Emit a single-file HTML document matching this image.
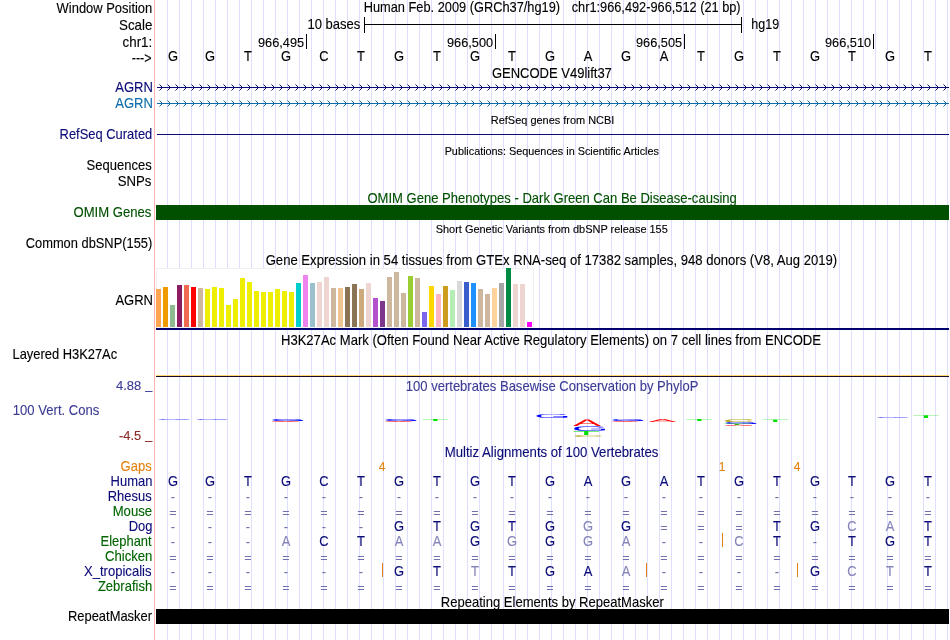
<!DOCTYPE html>
<html><head><meta charset="utf-8"><title>UCSC Genome Browser - hg19 chr1:966,492-966,512</title>
<style>
html,body{margin:0;padding:0;background:#fff;}
svg{display:block;will-change:transform;}
text{font-family:"Liberation Sans", Arial, Helvetica, sans-serif;font-size:14px;fill:#000;stroke:#000;stroke-width:.12px;white-space:pre;}
.s{font-size:11px;}
.r{text-anchor:end;}
.c{text-anchor:middle;}
.nv{fill:#0c0c78;stroke:#0c0c78;}
.lt{fill:#8585bb;stroke:#8585bb;}
.gr{fill:#005000;stroke:#005000;}
.dg{fill:#006400;stroke:#006400;}
.or{fill:#e2820f;stroke:#e2820f;}
.cn{fill:#3c3c96;stroke:#3c3c96;}
.rd{fill:#8c2828;stroke:#8c2828;}
.tl{fill:#0f6eaa;stroke:#0f6eaa;}
.dm{fill:#7070ae;stroke:none;}
</style></head><body>
<svg width="950" height="640" viewBox="0 0 950 640">
<rect x="0" y="0" width="950" height="640" fill="#fff"/>

<g shape-rendering="crispEdges">
<rect x="154" y="0" width="1" height="640" fill="#ffb4b4"/>
<rect x="167" y="0" width="1" height="640" fill="#dedeff"/>
<rect x="179" y="0" width="1" height="640" fill="#dedeff"/>
<rect x="191" y="0" width="1" height="640" fill="#dedeff"/>
<rect x="203" y="0" width="1" height="640" fill="#dedeff"/>
<rect x="215" y="0" width="1" height="640" fill="#dedeff"/>
<rect x="227" y="0" width="1" height="640" fill="#dedeff"/>
<rect x="239" y="0" width="1" height="640" fill="#dedeff"/>
<rect x="251" y="0" width="1" height="640" fill="#dedeff"/>
<rect x="263" y="0" width="1" height="640" fill="#dedeff"/>
<rect x="275" y="0" width="1" height="640" fill="#dedeff"/>
<rect x="287" y="0" width="1" height="640" fill="#dedeff"/>
<rect x="299" y="0" width="1" height="640" fill="#dedeff"/>
<rect x="311" y="0" width="1" height="640" fill="#dedeff"/>
<rect x="323" y="0" width="1" height="640" fill="#dedeff"/>
<rect x="335" y="0" width="1" height="640" fill="#dedeff"/>
<rect x="347" y="0" width="1" height="640" fill="#dedeff"/>
<rect x="359" y="0" width="1" height="640" fill="#dedeff"/>
<rect x="371" y="0" width="1" height="640" fill="#dedeff"/>
<rect x="383" y="0" width="1" height="640" fill="#dedeff"/>
<rect x="395" y="0" width="1" height="640" fill="#dedeff"/>
<rect x="407" y="0" width="1" height="640" fill="#dedeff"/>
<rect x="419" y="0" width="1" height="640" fill="#dedeff"/>
<rect x="431" y="0" width="1" height="640" fill="#dedeff"/>
<rect x="443" y="0" width="1" height="640" fill="#dedeff"/>
<rect x="455" y="0" width="1" height="640" fill="#dedeff"/>
<rect x="467" y="0" width="1" height="640" fill="#dedeff"/>
<rect x="479" y="0" width="1" height="640" fill="#dedeff"/>
<rect x="491" y="0" width="1" height="640" fill="#dedeff"/>
<rect x="503" y="0" width="1" height="640" fill="#dedeff"/>
<rect x="515" y="0" width="1" height="640" fill="#dedeff"/>
<rect x="527" y="0" width="1" height="640" fill="#dedeff"/>
<rect x="539" y="0" width="1" height="640" fill="#dedeff"/>
<rect x="551" y="0" width="1" height="640" fill="#dedeff"/>
<rect x="563" y="0" width="1" height="640" fill="#dedeff"/>
<rect x="575" y="0" width="1" height="640" fill="#dedeff"/>
<rect x="587" y="0" width="1" height="640" fill="#dedeff"/>
<rect x="599" y="0" width="1" height="640" fill="#dedeff"/>
<rect x="611" y="0" width="1" height="640" fill="#dedeff"/>
<rect x="623" y="0" width="1" height="640" fill="#dedeff"/>
<rect x="635" y="0" width="1" height="640" fill="#dedeff"/>
<rect x="647" y="0" width="1" height="640" fill="#dedeff"/>
<rect x="659" y="0" width="1" height="640" fill="#dedeff"/>
<rect x="671" y="0" width="1" height="640" fill="#dedeff"/>
<rect x="683" y="0" width="1" height="640" fill="#dedeff"/>
<rect x="695" y="0" width="1" height="640" fill="#dedeff"/>
<rect x="707" y="0" width="1" height="640" fill="#dedeff"/>
<rect x="719" y="0" width="1" height="640" fill="#dedeff"/>
<rect x="731" y="0" width="1" height="640" fill="#dedeff"/>
<rect x="743" y="0" width="1" height="640" fill="#dedeff"/>
<rect x="755" y="0" width="1" height="640" fill="#dedeff"/>
<rect x="767" y="0" width="1" height="640" fill="#dedeff"/>
<rect x="779" y="0" width="1" height="640" fill="#dedeff"/>
<rect x="791" y="0" width="1" height="640" fill="#dedeff"/>
<rect x="803" y="0" width="1" height="640" fill="#dedeff"/>
<rect x="815" y="0" width="1" height="640" fill="#dedeff"/>
<rect x="827" y="0" width="1" height="640" fill="#dedeff"/>
<rect x="839" y="0" width="1" height="640" fill="#dedeff"/>
<rect x="851" y="0" width="1" height="640" fill="#dedeff"/>
<rect x="863" y="0" width="1" height="640" fill="#dedeff"/>
<rect x="875" y="0" width="1" height="640" fill="#dedeff"/>
<rect x="887" y="0" width="1" height="640" fill="#dedeff"/>
<rect x="899" y="0" width="1" height="640" fill="#dedeff"/>
<rect x="911" y="0" width="1" height="640" fill="#dedeff"/>
<rect x="923" y="0" width="1" height="640" fill="#dedeff"/>
<rect x="935" y="0" width="1" height="640" fill="#dedeff"/>
<rect x="947" y="0" width="1" height="640" fill="#dedeff"/>
</g>
<text transform="translate(56.60 13) scale(0.9256 1)" class="">Window Position</text>
<text transform="translate(119.00 30) scale(0.9528 1)" class="">Scale</text>
<text transform="translate(122.56 47) scale(0.9523 1)" class="">chr1:</text>
<text transform="translate(131.69 63) scale(0.8985 1)" class="">---&gt;</text>
<text transform="translate(363.67 12) scale(0.9158 1)" class="">Human Feb. 2009 (GRCh37/hg19)</text>
<text transform="translate(571.69 12) scale(0.9128 1)" class="">chr1:966,492-966,512 (21 bp)</text>
<text transform="translate(307.41 29) scale(0.9320 1)" class="">10 bases</text>
<text transform="translate(751.26 29) scale(0.8969 1)" class="">hg19</text>
<g shape-rendering="crispEdges" fill="#000">
<rect x="364" y="24" width="378" height="1"/>
<rect x="364" y="17" width="1" height="16"/>
<rect x="741" y="17" width="1" height="16"/>
<rect x="306" y="34" width="1" height="15"/>
<rect x="495" y="34" width="1" height="15"/>
<rect x="684" y="34" width="1" height="15"/>
<rect x="873" y="34" width="1" height="15"/>
</g>
<text transform="translate(258.03 47) scale(0.9101 0.9)" class="">966,495</text>
<text transform="translate(447.03 47) scale(0.9101 0.9)" class="">966,500</text>
<text transform="translate(636.03 47) scale(0.9101 0.9)" class="">966,505</text>
<text transform="translate(825.03 47) scale(0.9101 0.9)" class="">966,510</text>
<text transform="translate(173.0 61) scale(0.925 1)" class="c" >G</text>
<text transform="translate(210.0 61) scale(0.925 1)" class="c" >G</text>
<text transform="translate(248.0 61) scale(0.925 1)" class="c" >T</text>
<text transform="translate(286.0 61) scale(0.925 1)" class="c" >G</text>
<text transform="translate(324.0 61) scale(0.925 1)" class="c" >C</text>
<text transform="translate(361.0 61) scale(0.925 1)" class="c" >T</text>
<text transform="translate(399.0 61) scale(0.925 1)" class="c" >G</text>
<text transform="translate(437.0 61) scale(0.925 1)" class="c" >T</text>
<text transform="translate(475.0 61) scale(0.925 1)" class="c" >G</text>
<text transform="translate(512.0 61) scale(0.925 1)" class="c" >T</text>
<text transform="translate(550.0 61) scale(0.925 1)" class="c" >G</text>
<text transform="translate(588.0 61) scale(0.925 1)" class="c" >A</text>
<text transform="translate(626.0 61) scale(0.925 1)" class="c" >G</text>
<text transform="translate(664.0 61) scale(0.925 1)" class="c" >A</text>
<text transform="translate(701.0 61) scale(0.925 1)" class="c" >T</text>
<text transform="translate(739.0 61) scale(0.925 1)" class="c" >G</text>
<text transform="translate(777.0 61) scale(0.925 1)" class="c" >T</text>
<text transform="translate(815.0 61) scale(0.925 1)" class="c" >G</text>
<text transform="translate(852.0 61) scale(0.925 1)" class="c" >T</text>
<text transform="translate(890.0 61) scale(0.925 1)" class="c" >G</text>
<text transform="translate(928.0 61) scale(0.925 1)" class="c" >T</text>
<text transform="translate(491.91 78) scale(0.9299 1)" class="">GENCODE V49lift37</text>
<text transform="translate(115.20 92) scale(0.9329 1)" class="nv">AGRN</text>
<text transform="translate(115.20 108) scale(0.9329 1)" class="tl">AGRN</text>
<g shape-rendering="crispEdges"><rect x="157" y="87" width="792" height="1" fill="#0c0c78"/></g>
<path d="M159.5 84.5L162.5 87.5L159.5 90.5M167.5 84.5L170.5 87.5L167.5 90.5M175.5 84.5L178.5 87.5L175.5 90.5M183.5 84.5L186.5 87.5L183.5 90.5M191.5 84.5L194.5 87.5L191.5 90.5M199.5 84.5L202.5 87.5L199.5 90.5M207.5 84.5L210.5 87.5L207.5 90.5M215.5 84.5L218.5 87.5L215.5 90.5M223.5 84.5L226.5 87.5L223.5 90.5M231.5 84.5L234.5 87.5L231.5 90.5M239.5 84.5L242.5 87.5L239.5 90.5M247.5 84.5L250.5 87.5L247.5 90.5M255.5 84.5L258.5 87.5L255.5 90.5M263.5 84.5L266.5 87.5L263.5 90.5M271.5 84.5L274.5 87.5L271.5 90.5M279.5 84.5L282.5 87.5L279.5 90.5M287.5 84.5L290.5 87.5L287.5 90.5M295.5 84.5L298.5 87.5L295.5 90.5M303.5 84.5L306.5 87.5L303.5 90.5M311.5 84.5L314.5 87.5L311.5 90.5M319.5 84.5L322.5 87.5L319.5 90.5M327.5 84.5L330.5 87.5L327.5 90.5M335.5 84.5L338.5 87.5L335.5 90.5M343.5 84.5L346.5 87.5L343.5 90.5M351.5 84.5L354.5 87.5L351.5 90.5M359.5 84.5L362.5 87.5L359.5 90.5M367.5 84.5L370.5 87.5L367.5 90.5M375.5 84.5L378.5 87.5L375.5 90.5M383.5 84.5L386.5 87.5L383.5 90.5M391.5 84.5L394.5 87.5L391.5 90.5M399.5 84.5L402.5 87.5L399.5 90.5M407.5 84.5L410.5 87.5L407.5 90.5M415.5 84.5L418.5 87.5L415.5 90.5M423.5 84.5L426.5 87.5L423.5 90.5M431.5 84.5L434.5 87.5L431.5 90.5M439.5 84.5L442.5 87.5L439.5 90.5M447.5 84.5L450.5 87.5L447.5 90.5M455.5 84.5L458.5 87.5L455.5 90.5M463.5 84.5L466.5 87.5L463.5 90.5M471.5 84.5L474.5 87.5L471.5 90.5M479.5 84.5L482.5 87.5L479.5 90.5M487.5 84.5L490.5 87.5L487.5 90.5M495.5 84.5L498.5 87.5L495.5 90.5M503.5 84.5L506.5 87.5L503.5 90.5M511.5 84.5L514.5 87.5L511.5 90.5M519.5 84.5L522.5 87.5L519.5 90.5M527.5 84.5L530.5 87.5L527.5 90.5M535.5 84.5L538.5 87.5L535.5 90.5M543.5 84.5L546.5 87.5L543.5 90.5M551.5 84.5L554.5 87.5L551.5 90.5M559.5 84.5L562.5 87.5L559.5 90.5M567.5 84.5L570.5 87.5L567.5 90.5M575.5 84.5L578.5 87.5L575.5 90.5M583.5 84.5L586.5 87.5L583.5 90.5M591.5 84.5L594.5 87.5L591.5 90.5M599.5 84.5L602.5 87.5L599.5 90.5M607.5 84.5L610.5 87.5L607.5 90.5M615.5 84.5L618.5 87.5L615.5 90.5M623.5 84.5L626.5 87.5L623.5 90.5M631.5 84.5L634.5 87.5L631.5 90.5M639.5 84.5L642.5 87.5L639.5 90.5M647.5 84.5L650.5 87.5L647.5 90.5M655.5 84.5L658.5 87.5L655.5 90.5M663.5 84.5L666.5 87.5L663.5 90.5M671.5 84.5L674.5 87.5L671.5 90.5M679.5 84.5L682.5 87.5L679.5 90.5M687.5 84.5L690.5 87.5L687.5 90.5M695.5 84.5L698.5 87.5L695.5 90.5M703.5 84.5L706.5 87.5L703.5 90.5M711.5 84.5L714.5 87.5L711.5 90.5M719.5 84.5L722.5 87.5L719.5 90.5M727.5 84.5L730.5 87.5L727.5 90.5M735.5 84.5L738.5 87.5L735.5 90.5M743.5 84.5L746.5 87.5L743.5 90.5M751.5 84.5L754.5 87.5L751.5 90.5M759.5 84.5L762.5 87.5L759.5 90.5M767.5 84.5L770.5 87.5L767.5 90.5M775.5 84.5L778.5 87.5L775.5 90.5M783.5 84.5L786.5 87.5L783.5 90.5M791.5 84.5L794.5 87.5L791.5 90.5M799.5 84.5L802.5 87.5L799.5 90.5M807.5 84.5L810.5 87.5L807.5 90.5M815.5 84.5L818.5 87.5L815.5 90.5M823.5 84.5L826.5 87.5L823.5 90.5M831.5 84.5L834.5 87.5L831.5 90.5M839.5 84.5L842.5 87.5L839.5 90.5M847.5 84.5L850.5 87.5L847.5 90.5M855.5 84.5L858.5 87.5L855.5 90.5M863.5 84.5L866.5 87.5L863.5 90.5M871.5 84.5L874.5 87.5L871.5 90.5M879.5 84.5L882.5 87.5L879.5 90.5M887.5 84.5L890.5 87.5L887.5 90.5M895.5 84.5L898.5 87.5L895.5 90.5M903.5 84.5L906.5 87.5L903.5 90.5M911.5 84.5L914.5 87.5L911.5 90.5M919.5 84.5L922.5 87.5L919.5 90.5M927.5 84.5L930.5 87.5L927.5 90.5M935.5 84.5L938.5 87.5L935.5 90.5M943.5 84.5L946.5 87.5L943.5 90.5" stroke="#0c0c78" stroke-width="1" fill="none"/>
<g shape-rendering="crispEdges"><rect x="157" y="103" width="792" height="1" fill="#0f6eaa"/></g>
<path d="M159.5 100.5L162.5 103.5L159.5 106.5M167.5 100.5L170.5 103.5L167.5 106.5M175.5 100.5L178.5 103.5L175.5 106.5M183.5 100.5L186.5 103.5L183.5 106.5M191.5 100.5L194.5 103.5L191.5 106.5M199.5 100.5L202.5 103.5L199.5 106.5M207.5 100.5L210.5 103.5L207.5 106.5M215.5 100.5L218.5 103.5L215.5 106.5M223.5 100.5L226.5 103.5L223.5 106.5M231.5 100.5L234.5 103.5L231.5 106.5M239.5 100.5L242.5 103.5L239.5 106.5M247.5 100.5L250.5 103.5L247.5 106.5M255.5 100.5L258.5 103.5L255.5 106.5M263.5 100.5L266.5 103.5L263.5 106.5M271.5 100.5L274.5 103.5L271.5 106.5M279.5 100.5L282.5 103.5L279.5 106.5M287.5 100.5L290.5 103.5L287.5 106.5M295.5 100.5L298.5 103.5L295.5 106.5M303.5 100.5L306.5 103.5L303.5 106.5M311.5 100.5L314.5 103.5L311.5 106.5M319.5 100.5L322.5 103.5L319.5 106.5M327.5 100.5L330.5 103.5L327.5 106.5M335.5 100.5L338.5 103.5L335.5 106.5M343.5 100.5L346.5 103.5L343.5 106.5M351.5 100.5L354.5 103.5L351.5 106.5M359.5 100.5L362.5 103.5L359.5 106.5M367.5 100.5L370.5 103.5L367.5 106.5M375.5 100.5L378.5 103.5L375.5 106.5M383.5 100.5L386.5 103.5L383.5 106.5M391.5 100.5L394.5 103.5L391.5 106.5M399.5 100.5L402.5 103.5L399.5 106.5M407.5 100.5L410.5 103.5L407.5 106.5M415.5 100.5L418.5 103.5L415.5 106.5M423.5 100.5L426.5 103.5L423.5 106.5M431.5 100.5L434.5 103.5L431.5 106.5M439.5 100.5L442.5 103.5L439.5 106.5M447.5 100.5L450.5 103.5L447.5 106.5M455.5 100.5L458.5 103.5L455.5 106.5M463.5 100.5L466.5 103.5L463.5 106.5M471.5 100.5L474.5 103.5L471.5 106.5M479.5 100.5L482.5 103.5L479.5 106.5M487.5 100.5L490.5 103.5L487.5 106.5M495.5 100.5L498.5 103.5L495.5 106.5M503.5 100.5L506.5 103.5L503.5 106.5M511.5 100.5L514.5 103.5L511.5 106.5M519.5 100.5L522.5 103.5L519.5 106.5M527.5 100.5L530.5 103.5L527.5 106.5M535.5 100.5L538.5 103.5L535.5 106.5M543.5 100.5L546.5 103.5L543.5 106.5M551.5 100.5L554.5 103.5L551.5 106.5M559.5 100.5L562.5 103.5L559.5 106.5M567.5 100.5L570.5 103.5L567.5 106.5M575.5 100.5L578.5 103.5L575.5 106.5M583.5 100.5L586.5 103.5L583.5 106.5M591.5 100.5L594.5 103.5L591.5 106.5M599.5 100.5L602.5 103.5L599.5 106.5M607.5 100.5L610.5 103.5L607.5 106.5M615.5 100.5L618.5 103.5L615.5 106.5M623.5 100.5L626.5 103.5L623.5 106.5M631.5 100.5L634.5 103.5L631.5 106.5M639.5 100.5L642.5 103.5L639.5 106.5M647.5 100.5L650.5 103.5L647.5 106.5M655.5 100.5L658.5 103.5L655.5 106.5M663.5 100.5L666.5 103.5L663.5 106.5M671.5 100.5L674.5 103.5L671.5 106.5M679.5 100.5L682.5 103.5L679.5 106.5M687.5 100.5L690.5 103.5L687.5 106.5M695.5 100.5L698.5 103.5L695.5 106.5M703.5 100.5L706.5 103.5L703.5 106.5M711.5 100.5L714.5 103.5L711.5 106.5M719.5 100.5L722.5 103.5L719.5 106.5M727.5 100.5L730.5 103.5L727.5 106.5M735.5 100.5L738.5 103.5L735.5 106.5M743.5 100.5L746.5 103.5L743.5 106.5M751.5 100.5L754.5 103.5L751.5 106.5M759.5 100.5L762.5 103.5L759.5 106.5M767.5 100.5L770.5 103.5L767.5 106.5M775.5 100.5L778.5 103.5L775.5 106.5M783.5 100.5L786.5 103.5L783.5 106.5M791.5 100.5L794.5 103.5L791.5 106.5M799.5 100.5L802.5 103.5L799.5 106.5M807.5 100.5L810.5 103.5L807.5 106.5M815.5 100.5L818.5 103.5L815.5 106.5M823.5 100.5L826.5 103.5L823.5 106.5M831.5 100.5L834.5 103.5L831.5 106.5M839.5 100.5L842.5 103.5L839.5 106.5M847.5 100.5L850.5 103.5L847.5 106.5M855.5 100.5L858.5 103.5L855.5 106.5M863.5 100.5L866.5 103.5L863.5 106.5M871.5 100.5L874.5 103.5L871.5 106.5M879.5 100.5L882.5 103.5L879.5 106.5M887.5 100.5L890.5 103.5L887.5 106.5M895.5 100.5L898.5 103.5L895.5 106.5M903.5 100.5L906.5 103.5L903.5 106.5M911.5 100.5L914.5 103.5L911.5 106.5M919.5 100.5L922.5 103.5L919.5 106.5M927.5 100.5L930.5 103.5L927.5 106.5M935.5 100.5L938.5 103.5L935.5 106.5M943.5 100.5L946.5 103.5L943.5 106.5" stroke="#0f6eaa" stroke-width="1" fill="none"/>
<text transform="translate(490.83 124) scale(0.9964 1)" class="s">RefSeq genes from NCBI</text>
<text transform="translate(59.56 139) scale(0.9246 1)" class="nv">RefSeq Curated</text>
<g shape-rendering="crispEdges"><rect x="157" y="134" width="792" height="1" fill="#0c0c78"/></g>
<text transform="translate(444.64 155) scale(0.9861 1)" class="s">Publications: Sequences in Scientific Articles</text>
<text transform="translate(86.62 170) scale(0.9285 1)" class="">Sequences</text>
<text transform="translate(117.81 186) scale(0.9405 1)" class="">SNPs</text>
<text transform="translate(367.42 203) scale(0.9318 1)" class="gr">OMIM Gene Phenotypes - Dark Green Can Be Disease-causing</text>
<text transform="translate(73.51 217) scale(0.9365 1)" class="gr">OMIM Genes</text>
<g shape-rendering="crispEdges"><rect x="156" y="205" width="793" height="15" fill="#005000"/></g>
<text transform="translate(435.70 233) scale(0.9964 1)" class="s">Short Genetic Variants from dbSNP release 155</text>
<text transform="translate(25.77 248) scale(0.9186 1)" class="">Common dbSNP(155)</text>
<text transform="translate(265.66 265) scale(0.9370 1)" class="">Gene Expression in 54 tissues from GTEx RNA-seq of 17382 samples, 948 donors (V8, Aug 2019)</text>
<text transform="translate(115.40 305) scale(0.9304 1)" class="">AGRN</text>
<g shape-rendering="crispEdges">
<rect x="156" y="268" width="378" height="60" fill="#fff"/>
<rect x="156" y="268" width="378" height="1" fill="#f0f0f0"/>
<rect x="156" y="268" width="1" height="60" fill="#f0f0f0"/>
<rect x="533" y="268" width="1" height="60" fill="#f0f0f0"/>
<rect x="156" y="327" width="378" height="1" fill="#f4f4f4"/>
<rect x="156" y="289" width="5" height="38" fill="#FFA54F"/>
<rect x="163" y="287" width="5" height="40" fill="#EE9A00"/>
<rect x="170" y="305" width="5" height="22" fill="#8FBC8F"/>
<rect x="177" y="285" width="5" height="42" fill="#8B1C62"/>
<rect x="184" y="285" width="5" height="42" fill="#EE6A50"/>
<rect x="191" y="287" width="5" height="40" fill="#FF0000"/>
<rect x="198" y="288" width="5" height="39" fill="#CDB79E"/>
<rect x="205" y="289" width="5" height="38" fill="#EEEE00"/>
<rect x="212" y="287" width="5" height="40" fill="#EEEE00"/>
<rect x="219" y="288" width="5" height="39" fill="#EEEE00"/>
<rect x="226" y="305" width="5" height="22" fill="#EEEE00"/>
<rect x="233" y="299" width="5" height="28" fill="#EEEE00"/>
<rect x="240" y="278" width="5" height="49" fill="#EEEE00"/>
<rect x="247" y="282" width="5" height="45" fill="#EEEE00"/>
<rect x="254" y="291" width="5" height="36" fill="#EEEE00"/>
<rect x="261" y="292" width="5" height="35" fill="#EEEE00"/>
<rect x="268" y="292" width="5" height="35" fill="#EEEE00"/>
<rect x="275" y="289" width="5" height="38" fill="#EEEE00"/>
<rect x="282" y="291" width="5" height="36" fill="#EEEE00"/>
<rect x="289" y="292" width="5" height="35" fill="#EEEE00"/>
<rect x="296" y="283" width="5" height="44" fill="#00CDCD"/>
<rect x="303" y="275" width="5" height="52" fill="#EE82EE"/>
<rect x="310" y="283" width="5" height="44" fill="#9AC0CD"/>
<rect x="317" y="282" width="5" height="45" fill="#EED5D2"/>
<rect x="324" y="277" width="5" height="50" fill="#EED5D2"/>
<rect x="331" y="288" width="5" height="39" fill="#CDB79E"/>
<rect x="338" y="288" width="5" height="39" fill="#EEC591"/>
<rect x="345" y="287" width="5" height="40" fill="#8B7355"/>
<rect x="352" y="284" width="5" height="43" fill="#8B7355"/>
<rect x="359" y="289" width="5" height="38" fill="#CDAA7D"/>
<rect x="366" y="283" width="5" height="44" fill="#EED5D2"/>
<rect x="373" y="298" width="5" height="29" fill="#B452CD"/>
<rect x="380" y="301" width="5" height="26" fill="#7A378B"/>
<rect x="387" y="277" width="5" height="50" fill="#CDB79E"/>
<rect x="394" y="272" width="5" height="55" fill="#CDB79E"/>
<rect x="401" y="293" width="5" height="34" fill="#CDB79E"/>
<rect x="408" y="276" width="5" height="51" fill="#9ACD32"/>
<rect x="415" y="278" width="5" height="49" fill="#CDB79E"/>
<rect x="422" y="312" width="5" height="15" fill="#7A67EE"/>
<rect x="429" y="286" width="5" height="41" fill="#FFD700"/>
<rect x="436" y="294" width="5" height="33" fill="#FFB6C1"/>
<rect x="443" y="286" width="5" height="41" fill="#CD9B1D"/>
<rect x="450" y="290" width="5" height="37" fill="#B4EEB4"/>
<rect x="457" y="281" width="5" height="46" fill="#D9D9D9"/>
<rect x="464" y="282" width="5" height="45" fill="#3A5FCD"/>
<rect x="471" y="283" width="5" height="44" fill="#1E90FF"/>
<rect x="478" y="289" width="5" height="38" fill="#CDB79E"/>
<rect x="485" y="294" width="5" height="33" fill="#CDB79E"/>
<rect x="492" y="288" width="5" height="39" fill="#FFD39B"/>
<rect x="499" y="283" width="5" height="44" fill="#A6A6A6"/>
<rect x="506" y="268" width="5" height="59" fill="#008B45"/>
<rect x="513" y="284" width="5" height="43" fill="#EED5D2"/>
<rect x="520" y="284" width="5" height="43" fill="#EED5D2"/>
<rect x="527" y="322" width="5" height="5" fill="#FF00FF"/>
<rect x="156" y="328" width="793" height="2" fill="#00006e"/>
</g>
<text transform="translate(280.95 345) scale(0.9338 1)" class="">H3K27Ac Mark (Often Found Near Active Regulatory Elements) on 7 cell lines from ENCODE</text>
<text transform="translate(12.46 359) scale(0.9225 1)" class="">Layered H3K27Ac</text>
<g shape-rendering="crispEdges"><rect x="156" y="375" width="793" height="1" fill="#ffd56e"/><rect x="156" y="376" width="793" height="1" fill="#1a0a30"/></g>
<text transform="translate(405.81 391) scale(0.9312 1)" class="cn">100 vertebrates Basewise Conservation by PhyloP</text>
<text transform="translate(115.91 390) scale(0.9303 0.9)" class="cn">4.88</text>
<text transform="translate(145.13 389) scale(0.9091 1)" class="cn">_</text>
<text transform="translate(12.81 415) scale(0.9357 1)" class="cn">100 Vert. Cons</text>
<text transform="translate(118.98 440) scale(0.9207 0.9)" class="rd">-4.5</text>
<text transform="translate(145.13 439) scale(0.9091 1)" class="rd">_</text>
<g font-weight="normal" style="font-size:100px;text-rendering:geometricPrecision;stroke:none">
<text transform="matrix(0.4724 0 0 0.01252 156.29 419.88)" style="font-size:100px;fill:#0000ff;stroke:none" fill-opacity="1">G</text>
<text transform="matrix(0.4724 0 0 0.01252 194.29 419.88)" style="font-size:100px;fill:#0000ff;stroke:none" fill-opacity="1">G</text>
<text transform="matrix(0.4724 0 0 0.02922 269.99 420.85)" style="font-size:100px;fill:#0000ff;stroke:none" fill-opacity="1">G</text>
<text transform="matrix(0.4197 0 0 0.01564 271.60 421.80)" style="font-size:100px;fill:#ff0000;stroke:none" fill-opacity="1">A</text>
<rect x="274" y="419.4" width="27.0" height="1.1" fill="#0000ff" fill-opacity="0.35"/>
<rect x="272" y="421.0" width="27.0" height="0.7" fill="#ff0000" fill-opacity="0.3"/>
<text transform="matrix(0.4724 0 0 0.02922 383.19 420.85)" style="font-size:100px;fill:#0000ff;stroke:none" fill-opacity="1">G</text>
<text transform="matrix(0.4197 0 0 0.01564 384.80 421.80)" style="font-size:100px;fill:#ff0000;stroke:none" fill-opacity="1">A</text>
<rect x="387" y="419.4" width="27.0" height="1.1" fill="#0000ff" fill-opacity="0.35"/>
<rect x="385" y="421.0" width="27.0" height="0.7" fill="#ff0000" fill-opacity="0.3"/>
<text transform="matrix(0.4515 0 0 0.02844 421.44 421.00)" style="font-size:100px;fill:#00e000;stroke:none" fill-opacity="1">T</text>
<text transform="matrix(0.4724 0 0 0.05843 533.89 418.01)" style="font-size:100px;fill:#0000ff;stroke:none" fill-opacity="1">G</text>
<text transform="matrix(0.4197 0 0 0.09529 573.10 426.00)" style="font-size:100px;fill:#ff0000;stroke:none" fill-opacity="1">A</text>
<text transform="matrix(0.4724 0 0 0.06817 571.79 430.79)" style="font-size:100px;fill:#0000ff;stroke:none" fill-opacity="1">G</text>
<text transform="matrix(0.4515 0 0 0.05689 572.39 434.90)" style="font-size:100px;fill:#00e000;stroke:none" fill-opacity="1">T</text>
<text transform="matrix(0.4371 0 0 0.02922 572.55 436.95)" style="font-size:100px;fill:#b8a820;stroke:none" fill-opacity="1">C</text>
<text transform="matrix(0.4724 0 0 0.03061 609.99 420.95)" style="font-size:100px;fill:#0000ff;stroke:none" fill-opacity="1">G</text>
<text transform="matrix(0.4197 0 0 0.01422 611.60 421.80)" style="font-size:100px;fill:#ff0000;stroke:none" fill-opacity="1">A</text>
<rect x="614" y="419.4" width="27.0" height="1.2" fill="#0000ff" fill-opacity="0.35"/>
<rect x="612" y="421.0" width="27.0" height="0.7" fill="#ff0000" fill-opacity="0.2"/>
<text transform="matrix(0.4197 0 0 0.04267 648.40 422.00)" style="font-size:100px;fill:#ff0000;stroke:none" fill-opacity="1">A</text>
<text transform="matrix(0.4515 0 0 0.02844 685.39 421.00)" style="font-size:100px;fill:#00e000;stroke:none" fill-opacity="1">T</text>
<text transform="matrix(0.4371 0 0 0.03757 723.05 421.64)" style="font-size:100px;fill:#b8a820;stroke:none" fill-opacity="1">C</text>
<text transform="matrix(0.4371 0 0 0.03757 723.05 421.64)" style="font-size:100px;fill:#b8a820;stroke:none" fill-opacity="1">C</text>
<text transform="matrix(0.4724 0 0 0.03061 722.89 423.95)" style="font-size:100px;fill:#0000ff;stroke:none" fill-opacity="1">G</text>
<rect x="727" y="422.3" width="26.0" height="1.2" fill="#0000ff" fill-opacity="0.35"/>
<text transform="matrix(0.4515 0 0 0.01707 723.29 425.00)" style="font-size:100px;fill:#00e000;stroke:none" fill-opacity="1">T</text>
<text transform="matrix(0.4197 0 0 0.01991 724.50 426.00)" style="font-size:100px;fill:#ff0000;stroke:none" fill-opacity="1">A</text>
<rect x="725" y="425.0" width="27.0" height="0.8" fill="#ff0000" fill-opacity="0.3"/>
<text transform="matrix(0.4515 0 0 0.03840 761.39 421.90)" style="font-size:100px;fill:#00e000;stroke:none" fill-opacity="1">T</text>
<text transform="matrix(0.4724 0 0 0.01252 874.39 417.88)" style="font-size:100px;fill:#0000ff;stroke:none" fill-opacity="1">G</text>
<text transform="matrix(0.4515 0 0 0.03982 912.19 418.00)" style="font-size:100px;fill:#00e000;stroke:none" fill-opacity="1">T</text>
</g>
<text transform="translate(444.74 457) scale(0.9413 1)" class="nv">Multiz Alignments of 100 Vertebrates</text>
<text transform="translate(120.61 471) scale(0.9280 1)" class="or">Gaps</text>
<text transform="translate(110.56 486) scale(0.9268 1)" class="nv">Human</text>
<text transform="translate(173.0 486) scale(0.925 1)" class="c nv" >G</text>
<text transform="translate(210.0 486) scale(0.925 1)" class="c nv" >G</text>
<text transform="translate(248.0 486) scale(0.925 1)" class="c nv" >T</text>
<text transform="translate(286.0 486) scale(0.925 1)" class="c nv" >G</text>
<text transform="translate(324.0 486) scale(0.925 1)" class="c nv" >C</text>
<text transform="translate(361.0 486) scale(0.925 1)" class="c nv" >T</text>
<text transform="translate(399.0 486) scale(0.925 1)" class="c nv" >G</text>
<text transform="translate(437.0 486) scale(0.925 1)" class="c nv" >T</text>
<text transform="translate(475.0 486) scale(0.925 1)" class="c nv" >G</text>
<text transform="translate(512.0 486) scale(0.925 1)" class="c nv" >T</text>
<text transform="translate(550.0 486) scale(0.925 1)" class="c nv" >G</text>
<text transform="translate(588.0 486) scale(0.925 1)" class="c nv" >A</text>
<text transform="translate(626.0 486) scale(0.925 1)" class="c nv" >G</text>
<text transform="translate(664.0 486) scale(0.925 1)" class="c nv" >A</text>
<text transform="translate(701.0 486) scale(0.925 1)" class="c nv" >T</text>
<text transform="translate(739.0 486) scale(0.925 1)" class="c nv" >G</text>
<text transform="translate(777.0 486) scale(0.925 1)" class="c nv" >T</text>
<text transform="translate(815.0 486) scale(0.925 1)" class="c nv" >G</text>
<text transform="translate(852.0 486) scale(0.925 1)" class="c nv" >T</text>
<text transform="translate(890.0 486) scale(0.925 1)" class="c nv" >G</text>
<text transform="translate(928.0 486) scale(0.925 1)" class="c nv" >T</text>
<text transform="translate(107.76 501) scale(0.9249 1)" class="nv">Rhesus</text>
<text transform="translate(173.0 502) scale(0.925 1)" class="c dm" >-</text>
<text transform="translate(210.0 502) scale(0.925 1)" class="c dm" >-</text>
<text transform="translate(248.0 502) scale(0.925 1)" class="c dm" >-</text>
<text transform="translate(286.0 502) scale(0.925 1)" class="c dm" >-</text>
<text transform="translate(324.0 502) scale(0.925 1)" class="c dm" >-</text>
<text transform="translate(361.0 502) scale(0.925 1)" class="c dm" >-</text>
<text transform="translate(399.0 502) scale(0.925 1)" class="c dm" >-</text>
<text transform="translate(437.0 502) scale(0.925 1)" class="c dm" >-</text>
<text transform="translate(475.0 502) scale(0.925 1)" class="c dm" >-</text>
<text transform="translate(512.0 502) scale(0.925 1)" class="c dm" >-</text>
<text transform="translate(550.0 502) scale(0.925 1)" class="c dm" >-</text>
<text transform="translate(588.0 502) scale(0.925 1)" class="c dm" >-</text>
<text transform="translate(626.0 502) scale(0.925 1)" class="c dm" >-</text>
<text transform="translate(664.0 502) scale(0.925 1)" class="c dm" >-</text>
<text transform="translate(701.0 502) scale(0.925 1)" class="c dm" >-</text>
<text transform="translate(739.0 502) scale(0.925 1)" class="c dm" >-</text>
<text transform="translate(777.0 502) scale(0.925 1)" class="c dm" >-</text>
<text transform="translate(815.0 502) scale(0.925 1)" class="c dm" >-</text>
<text transform="translate(852.0 502) scale(0.925 1)" class="c dm" >-</text>
<text transform="translate(890.0 502) scale(0.925 1)" class="c dm" >-</text>
<text transform="translate(928.0 502) scale(0.925 1)" class="c dm" >-</text>
<text transform="translate(112.64 516) scale(0.9405 1)" class="dg">Mouse</text>
<text transform="translate(173.0 517) scale(1.2 1)" class="c dm" style="font-size:10.5px">=</text>
<text transform="translate(210.0 517) scale(1.2 1)" class="c dm" style="font-size:10.5px">=</text>
<text transform="translate(248.0 517) scale(1.2 1)" class="c dm" style="font-size:10.5px">=</text>
<text transform="translate(286.0 517) scale(1.2 1)" class="c dm" style="font-size:10.5px">=</text>
<text transform="translate(324.0 517) scale(1.2 1)" class="c dm" style="font-size:10.5px">=</text>
<text transform="translate(361.0 517) scale(1.2 1)" class="c dm" style="font-size:10.5px">=</text>
<text transform="translate(399.0 517) scale(1.2 1)" class="c dm" style="font-size:10.5px">=</text>
<text transform="translate(437.0 517) scale(1.2 1)" class="c dm" style="font-size:10.5px">=</text>
<text transform="translate(475.0 517) scale(1.2 1)" class="c dm" style="font-size:10.5px">=</text>
<text transform="translate(512.0 517) scale(1.2 1)" class="c dm" style="font-size:10.5px">=</text>
<text transform="translate(550.0 517) scale(1.2 1)" class="c dm" style="font-size:10.5px">=</text>
<text transform="translate(588.0 517) scale(1.2 1)" class="c dm" style="font-size:10.5px">=</text>
<text transform="translate(626.0 517) scale(1.2 1)" class="c dm" style="font-size:10.5px">=</text>
<text transform="translate(664.0 517) scale(1.2 1)" class="c dm" style="font-size:10.5px">=</text>
<text transform="translate(701.0 517) scale(1.2 1)" class="c dm" style="font-size:10.5px">=</text>
<text transform="translate(739.0 517) scale(1.2 1)" class="c dm" style="font-size:10.5px">=</text>
<text transform="translate(777.0 517) scale(1.2 1)" class="c dm" style="font-size:10.5px">=</text>
<text transform="translate(815.0 517) scale(1.2 1)" class="c dm" style="font-size:10.5px">=</text>
<text transform="translate(852.0 517) scale(1.2 1)" class="c dm" style="font-size:10.5px">=</text>
<text transform="translate(890.0 517) scale(1.2 1)" class="c dm" style="font-size:10.5px">=</text>
<text transform="translate(928.0 517) scale(1.2 1)" class="c dm" style="font-size:10.5px">=</text>
<text transform="translate(128.66 531) scale(0.9237 1)" class="nv">Dog</text>
<text transform="translate(173.0 532) scale(0.925 1)" class="c dm" >-</text>
<text transform="translate(210.0 532) scale(0.925 1)" class="c dm" >-</text>
<text transform="translate(248.0 532) scale(0.925 1)" class="c dm" >-</text>
<text transform="translate(286.0 532) scale(0.925 1)" class="c dm" >-</text>
<text transform="translate(324.0 532) scale(0.925 1)" class="c dm" >-</text>
<text transform="translate(361.0 532) scale(0.925 1)" class="c dm" >-</text>
<text transform="translate(399.0 531) scale(0.925 1)" class="c nv" >G</text>
<text transform="translate(437.0 531) scale(0.925 1)" class="c nv" >T</text>
<text transform="translate(475.0 531) scale(0.925 1)" class="c nv" >G</text>
<text transform="translate(512.0 531) scale(0.925 1)" class="c nv" >T</text>
<text transform="translate(550.0 531) scale(0.925 1)" class="c nv" >G</text>
<text transform="translate(588.0 531) scale(0.925 1)" class="c lt" >G</text>
<text transform="translate(626.0 531) scale(0.925 1)" class="c nv" >G</text>
<text transform="translate(664.0 532) scale(1.2 1)" class="c dm" style="font-size:10.5px">=</text>
<text transform="translate(701.0 532) scale(1.2 1)" class="c dm" style="font-size:10.5px">=</text>
<text transform="translate(739.0 532) scale(1.2 1)" class="c dm" style="font-size:10.5px">=</text>
<text transform="translate(777.0 531) scale(0.925 1)" class="c nv" >T</text>
<text transform="translate(815.0 531) scale(0.925 1)" class="c nv" >G</text>
<text transform="translate(852.0 531) scale(0.925 1)" class="c lt" >C</text>
<text transform="translate(890.0 531) scale(0.925 1)" class="c lt" >A</text>
<text transform="translate(928.0 531) scale(0.925 1)" class="c nv" >T</text>
<text transform="translate(100.56 546) scale(0.9248 1)" class="dg">Elephant</text>
<text transform="translate(173.0 547) scale(0.925 1)" class="c dm" >-</text>
<text transform="translate(210.0 547) scale(0.925 1)" class="c dm" >-</text>
<text transform="translate(248.0 547) scale(0.925 1)" class="c dm" >-</text>
<text transform="translate(286.0 546) scale(0.925 1)" class="c lt" >A</text>
<text transform="translate(324.0 546) scale(0.925 1)" class="c nv" >C</text>
<text transform="translate(361.0 546) scale(0.925 1)" class="c nv" >T</text>
<text transform="translate(399.0 546) scale(0.925 1)" class="c lt" >A</text>
<text transform="translate(437.0 546) scale(0.925 1)" class="c lt" >A</text>
<text transform="translate(475.0 546) scale(0.925 1)" class="c nv" >G</text>
<text transform="translate(512.0 546) scale(0.925 1)" class="c lt" >G</text>
<text transform="translate(550.0 546) scale(0.925 1)" class="c nv" >G</text>
<text transform="translate(588.0 546) scale(0.925 1)" class="c lt" >G</text>
<text transform="translate(626.0 546) scale(0.925 1)" class="c lt" >A</text>
<text transform="translate(664.0 547) scale(0.925 1)" class="c dm" >-</text>
<text transform="translate(701.0 547) scale(0.925 1)" class="c dm" >-</text>
<text transform="translate(739.0 546) scale(0.925 1)" class="c lt" >C</text>
<text transform="translate(777.0 546) scale(0.925 1)" class="c nv" >T</text>
<text transform="translate(815.0 547) scale(0.925 1)" class="c dm" >-</text>
<text transform="translate(852.0 546) scale(0.925 1)" class="c nv" >T</text>
<text transform="translate(890.0 546) scale(0.925 1)" class="c nv" >G</text>
<text transform="translate(928.0 546) scale(0.925 1)" class="c nv" >T</text>
<text transform="translate(104.96 561) scale(0.9380 1)" class="dg">Chicken</text>
<text transform="translate(173.0 562) scale(1.2 1)" class="c dm" style="font-size:10.5px">=</text>
<text transform="translate(210.0 562) scale(1.2 1)" class="c dm" style="font-size:10.5px">=</text>
<text transform="translate(248.0 562) scale(1.2 1)" class="c dm" style="font-size:10.5px">=</text>
<text transform="translate(286.0 562) scale(1.2 1)" class="c dm" style="font-size:10.5px">=</text>
<text transform="translate(324.0 562) scale(1.2 1)" class="c dm" style="font-size:10.5px">=</text>
<text transform="translate(361.0 562) scale(1.2 1)" class="c dm" style="font-size:10.5px">=</text>
<text transform="translate(399.0 562) scale(1.2 1)" class="c dm" style="font-size:10.5px">=</text>
<text transform="translate(437.0 562) scale(1.2 1)" class="c dm" style="font-size:10.5px">=</text>
<text transform="translate(475.0 562) scale(1.2 1)" class="c dm" style="font-size:10.5px">=</text>
<text transform="translate(512.0 562) scale(1.2 1)" class="c dm" style="font-size:10.5px">=</text>
<text transform="translate(550.0 562) scale(1.2 1)" class="c dm" style="font-size:10.5px">=</text>
<text transform="translate(588.0 562) scale(1.2 1)" class="c dm" style="font-size:10.5px">=</text>
<text transform="translate(626.0 562) scale(1.2 1)" class="c dm" style="font-size:10.5px">=</text>
<text transform="translate(664.0 562) scale(1.2 1)" class="c dm" style="font-size:10.5px">=</text>
<text transform="translate(701.0 562) scale(1.2 1)" class="c dm" style="font-size:10.5px">=</text>
<text transform="translate(739.0 562) scale(1.2 1)" class="c dm" style="font-size:10.5px">=</text>
<text transform="translate(777.0 562) scale(1.2 1)" class="c dm" style="font-size:10.5px">=</text>
<text transform="translate(815.0 562) scale(1.2 1)" class="c dm" style="font-size:10.5px">=</text>
<text transform="translate(852.0 562) scale(1.2 1)" class="c dm" style="font-size:10.5px">=</text>
<text transform="translate(890.0 562) scale(1.2 1)" class="c dm" style="font-size:10.5px">=</text>
<text transform="translate(928.0 562) scale(1.2 1)" class="c dm" style="font-size:10.5px">=</text>
<text transform="translate(83.91 576) scale(0.9350 1)" class="nv">X_tropicalis</text>
<text transform="translate(173.0 577) scale(0.925 1)" class="c dm" >-</text>
<text transform="translate(210.0 577) scale(0.925 1)" class="c dm" >-</text>
<text transform="translate(248.0 577) scale(0.925 1)" class="c dm" >-</text>
<text transform="translate(286.0 577) scale(0.925 1)" class="c dm" >-</text>
<text transform="translate(324.0 577) scale(0.925 1)" class="c dm" >-</text>
<text transform="translate(361.0 577) scale(0.925 1)" class="c dm" >-</text>
<text transform="translate(399.0 576) scale(0.925 1)" class="c nv" >G</text>
<text transform="translate(437.0 576) scale(0.925 1)" class="c nv" >T</text>
<text transform="translate(475.0 576) scale(0.925 1)" class="c lt" >T</text>
<text transform="translate(512.0 576) scale(0.925 1)" class="c nv" >T</text>
<text transform="translate(550.0 576) scale(0.925 1)" class="c nv" >G</text>
<text transform="translate(588.0 576) scale(0.925 1)" class="c nv" >A</text>
<text transform="translate(626.0 576) scale(0.925 1)" class="c lt" >A</text>
<text transform="translate(664.0 577) scale(0.925 1)" class="c dm" >-</text>
<text transform="translate(701.0 577) scale(0.925 1)" class="c dm" >-</text>
<text transform="translate(739.0 577) scale(0.925 1)" class="c dm" >-</text>
<text transform="translate(777.0 577) scale(0.925 1)" class="c dm" >-</text>
<text transform="translate(815.0 576) scale(0.925 1)" class="c nv" >G</text>
<text transform="translate(852.0 576) scale(0.925 1)" class="c lt" >C</text>
<text transform="translate(890.0 576) scale(0.925 1)" class="c lt" >T</text>
<text transform="translate(928.0 576) scale(0.925 1)" class="c nv" >T</text>
<text transform="translate(97.89 591) scale(0.9322 1)" class="dg">Zebrafish</text>
<text transform="translate(173.0 592) scale(1.2 1)" class="c dm" style="font-size:10.5px">=</text>
<text transform="translate(210.0 592) scale(1.2 1)" class="c dm" style="font-size:10.5px">=</text>
<text transform="translate(248.0 592) scale(1.2 1)" class="c dm" style="font-size:10.5px">=</text>
<text transform="translate(286.0 592) scale(1.2 1)" class="c dm" style="font-size:10.5px">=</text>
<text transform="translate(324.0 592) scale(1.2 1)" class="c dm" style="font-size:10.5px">=</text>
<text transform="translate(361.0 592) scale(1.2 1)" class="c dm" style="font-size:10.5px">=</text>
<text transform="translate(399.0 592) scale(1.2 1)" class="c dm" style="font-size:10.5px">=</text>
<text transform="translate(437.0 592) scale(1.2 1)" class="c dm" style="font-size:10.5px">=</text>
<text transform="translate(475.0 592) scale(1.2 1)" class="c dm" style="font-size:10.5px">=</text>
<text transform="translate(512.0 592) scale(1.2 1)" class="c dm" style="font-size:10.5px">=</text>
<text transform="translate(550.0 592) scale(1.2 1)" class="c dm" style="font-size:10.5px">=</text>
<text transform="translate(588.0 592) scale(1.2 1)" class="c dm" style="font-size:10.5px">=</text>
<text transform="translate(626.0 592) scale(1.2 1)" class="c dm" style="font-size:10.5px">=</text>
<text transform="translate(664.0 592) scale(1.2 1)" class="c dm" style="font-size:10.5px">=</text>
<text transform="translate(701.0 592) scale(1.2 1)" class="c dm" style="font-size:10.5px">=</text>
<text transform="translate(739.0 592) scale(1.2 1)" class="c dm" style="font-size:10.5px">=</text>
<text transform="translate(777.0 592) scale(1.2 1)" class="c dm" style="font-size:10.5px">=</text>
<text transform="translate(815.0 592) scale(1.2 1)" class="c dm" style="font-size:10.5px">=</text>
<text transform="translate(852.0 592) scale(1.2 1)" class="c dm" style="font-size:10.5px">=</text>
<text transform="translate(890.0 592) scale(1.2 1)" class="c dm" style="font-size:10.5px">=</text>
<text transform="translate(928.0 592) scale(1.2 1)" class="c dm" style="font-size:10.5px">=</text>
<text transform="translate(382 471) scale(1 1)" class="c or" style="font-size:12px">4</text>
<text transform="translate(722 471) scale(1 1)" class="c or" style="font-size:12px">1</text>
<text transform="translate(797 471) scale(1 1)" class="c or" style="font-size:12px">4</text>
<g shape-rendering="crispEdges" fill="#e2820f">
<rect x="722" y="533" width="1" height="14"/>
<rect x="382" y="563" width="1" height="14"/>
<rect x="646" y="563" width="1" height="14"/>
<rect x="797" y="563" width="1" height="14"/>
</g>
<text transform="translate(440.85 607) scale(0.9306 1)" class="">Repeating Elements by RepeatMasker</text>
<text transform="translate(67.96 621) scale(0.9243 1)" class="">RepeatMasker</text>
<g shape-rendering="crispEdges"><rect x="156" y="609" width="793" height="15" fill="#000"/></g>
</svg></body></html>
